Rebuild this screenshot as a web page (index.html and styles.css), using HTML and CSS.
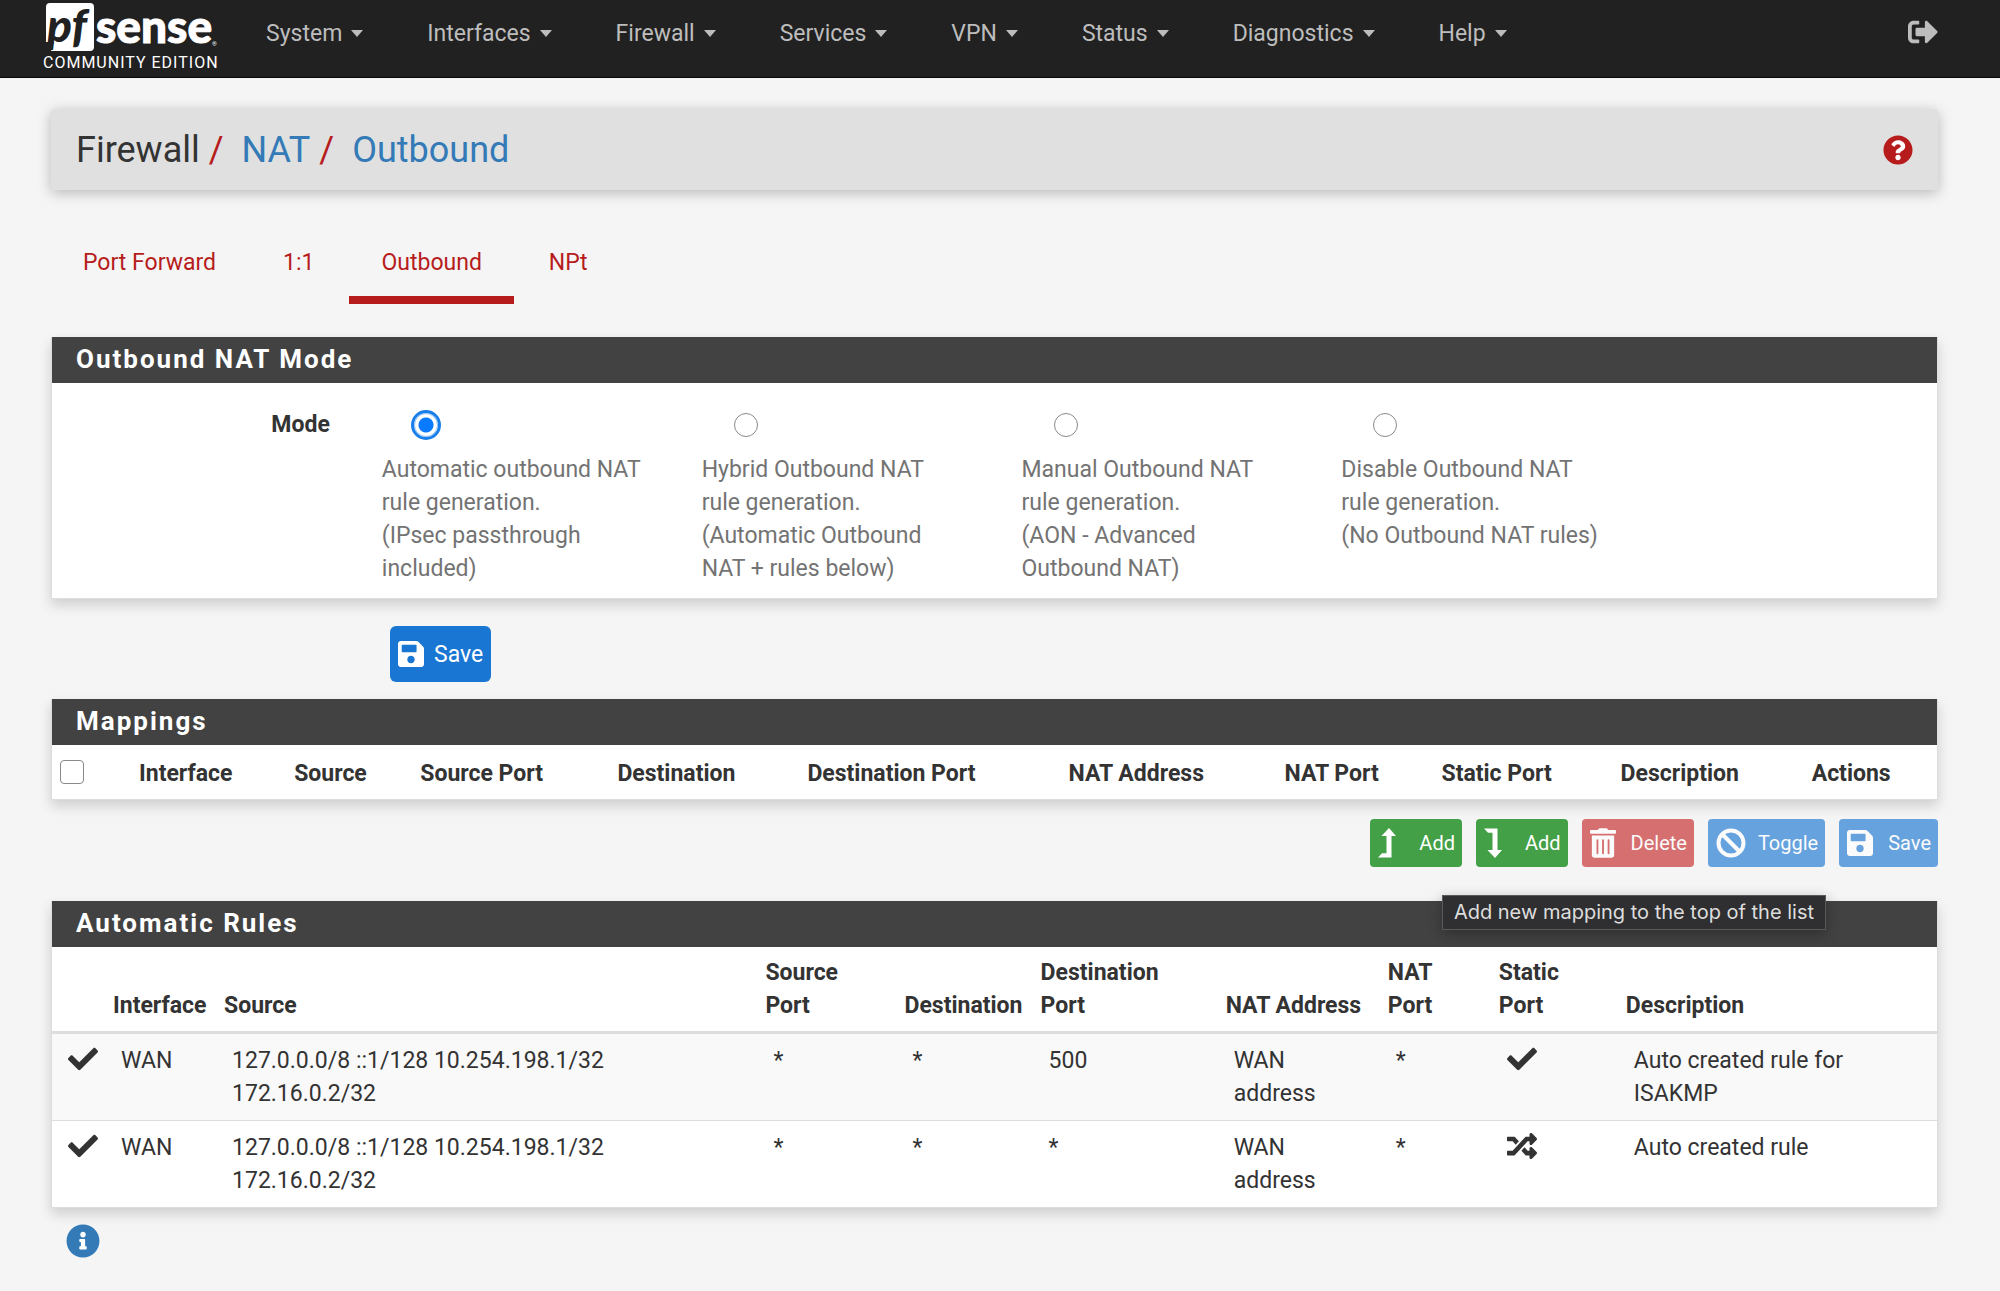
FILE: index.html
```html
<!DOCTYPE html>
<html lang="en">
<head>
    <meta charset="UTF-8">
    <meta name="viewport" content="width=device-width, initial-scale=1">
    <title>Firewall: NAT: Outbound</title>
    <link rel="stylesheet" href="styles.css">
</head>
<body>
    <!-- shared icon shapes -->
    <svg class="icon-defs" aria-hidden="true">
        <symbol id="icon-save" viewBox="0 0 448 512"><path d="M433.941 129.941l-83.882-83.882A48 48 0 0 0 316.118 32H48C21.49 32 0 53.49 0 80v352c0 26.51 21.49 48 48 48h352c26.51 0 48-21.49 48-48V163.882a48 48 0 0 0-14.059-33.941zM224 416c-35.346 0-64-28.654-64-64 0-35.346 28.654-64 64-64s64 28.654 64 64c0 35.346-28.654 64-64 64zm96-304.52V212c0 6.627-5.373 12-12 12H76c-6.627 0-12-5.373-12-12V108c0-6.627 5.373-12 12-12h228.52c3.183 0 6.235 1.264 8.485 3.515l3.48 3.48A11.996 11.996 0 0 1 320 111.48z"/></symbol>
        <symbol id="icon-check" viewBox="0 0 512 512"><path d="M173.898 439.404l-166.4-166.4c-9.997-9.997-9.997-26.206 0-36.204l36.203-36.204c9.997-9.998 26.207-9.998 36.204 0L192 312.69 432.095 72.596c9.997-9.997 26.207-9.997 36.204 0l36.203 36.204c9.997 9.997 9.997 26.206 0 36.204l-294.4 294.401c-9.998 9.997-26.207 9.997-36.204-.001z"/></symbol>
        <symbol id="icon-turn" viewBox="0 0 18 30"><path d="M11 0L18 8H13.500V29.500H0L4 25.300H8.500V8H3.500z" stroke-linejoin="round"/></symbol>
    </svg>

    <nav class="navbar">
        <a class="brand" href="#" aria-label="pfSense Community Edition">
            <svg class="logo" viewBox="0 0 174 50" width="174" height="50" aria-hidden="true">
                <path d="M3 4Q3 0 7 0H47Q51 0 51 4V44Q51 48 47 48H8L11 39L3 39z" fill="#fff"/>
                <text class="logo-pf" x="4" y="39">pf</text>
                <text class="logo-sense" x="53" y="40">sense</text>
                <text class="logo-mark" x="169" y="43">®</text>
            </svg>
            <span class="edition">COMMUNITY EDITION</span>
        </a>
        <ul class="menu">
            <li><a href="#">System <span class="caret"></span></a></li>
            <li><a href="#">Interfaces <span class="caret"></span></a></li>
            <li><a href="#">Firewall <span class="caret"></span></a></li>
            <li><a href="#">Services <span class="caret"></span></a></li>
            <li><a href="#">VPN <span class="caret"></span></a></li>
            <li><a href="#">Status <span class="caret"></span></a></li>
            <li><a href="#">Diagnostics <span class="caret"></span></a></li>
            <li><a href="#">Help <span class="caret"></span></a></li>
        </ul>
        <a class="logout" href="#" aria-label="Logout">
            <svg class="icon-lg" viewBox="0 0 512 512"><path d="M497 273L329 441c-15 15-41 4.500-41-17v-96H152c-13.300 0-24-10.700-24-24v-96c0-13.300 10.700-24 24-24h136V88c0-21.400 25.900-32 41-17l168 168c9.300 9.400 9.300 24.600 0 34zM192 436v-40c0-6.600-5.400-12-12-12H96c-17.700 0-32-14.300-32-32V160c0-17.700 14.300-32 32-32h84c6.600 0 12-5.400 12-12V76c0-6.600-5.400-12-12-12H96c-53 0-96 43-96 96v192c0 53 43 96 96 96h84c6.600 0 12-5.400 12-12z"/></svg>
        </a>
    </nav>

    <main class="container">
        <header class="page-header">
            <ol class="breadcrumb">
                <li>Firewall</li>
                <li><a href="#">NAT</a></li>
                <li><a href="#">Outbound</a></li>
            </ol>
            <a class="help" href="#" aria-label="Help for this page">
                <svg class="icon-lg" viewBox="0 0 512 512"><circle cx="256" cy="256" r="180" fill="#fff"/><path d="M504 256c0 136.997-111.043 248-248 248S8 392.997 8 256C8 119.083 119.043 8 256 8s248 111.083 248 248zM262.655 90c-54.497 0-89.255 22.957-116.549 63.758-3.536 5.286-2.353 12.415 2.715 16.258l34.699 26.310c5.205 3.947 12.621 3.008 16.665-2.122 17.864-22.658 30.113-35.797 57.303-35.797 20.429 0 45.698 13.148 45.698 32.958 0 14.976-12.363 22.667-32.534 33.976C247.128 238.528 216 254.941 216 296v4c0 6.627 5.373 12 12 12h56c6.627 0 12-5.373 12-12v-1.333c0-28.462 83.186-29.647 83.186-106.667 0-58.002-60.165-102-116.531-102zM256 338c-25.365 0-46 20.635-46 46 0 25.364 20.635 46 46 46s46-20.636 46-46c0-25.365-20.635-46-46-46z"/></svg>
            </a>
        </header>

        <ul class="tabs">
            <li><a href="#">Port Forward</a></li>
            <li><a href="#">1:1</a></li>
            <li class="active"><a href="#">Outbound</a></li>
            <li><a href="#">NPt</a></li>
        </ul>

        <form>
            <section class="panel">
                <h2 class="panel-heading">Outbound NAT Mode</h2>
                <div class="mode-row" role="radiogroup" aria-labelledby="mode-label">
                    <span class="mode-label" id="mode-label">Mode</span>
                    <label class="mode-option">
                        <input type="radio" name="mode" value="automatic" checked>
                        <span>Automatic outbound NAT rule generation.<br>(IPsec passthrough included)</span>
                    </label>
                    <label class="mode-option">
                        <input type="radio" name="mode" value="hybrid">
                        <span>Hybrid Outbound NAT rule generation.<br>(Automatic Outbound NAT + rules below)</span>
                    </label>
                    <label class="mode-option">
                        <input type="radio" name="mode" value="advanced">
                        <span>Manual Outbound NAT rule generation.<br>(AON - Advanced Outbound NAT)</span>
                    </label>
                    <label class="mode-option">
                        <input type="radio" name="mode" value="disabled">
                        <span>Disable Outbound NAT rule generation.<br>(No Outbound NAT rules)</span>
                    </label>
                </div>
            </section>
            <div class="form-actions">
                <button class="btn btn-primary" type="submit"><svg class="icon-save"><use href="#icon-save"/></svg>Save</button>
            </div>
        </form>

        <section class="panel">
            <h2 class="panel-heading">Mappings</h2>
            <table class="mappings">
                <colgroup><col><col><col><col><col><col><col><col><col><col><col></colgroup>
                <thead>
                    <tr>
                        <th><input type="checkbox" aria-label="Select all mappings"></th>
                        <th>Interface</th>
                        <th>Source</th>
                        <th>Source Port</th>
                        <th>Destination</th>
                        <th>Destination Port</th>
                        <th>NAT Address</th>
                        <th>NAT Port</th>
                        <th>Static Port</th>
                        <th>Description</th>
                        <th>Actions</th>
                    </tr>
                </thead>
            </table>
        </section>

        <div class="toolbar">
            <button class="btn btn-sm btn-success" type="button" aria-describedby="add-tip"><svg class="icon-turn"><use href="#icon-turn"/></svg>Add</button>
            <button class="btn btn-sm btn-success" type="button"><svg class="icon-turn down"><use href="#icon-turn"/></svg>Add</button>
            <button class="btn btn-sm btn-danger" type="button" disabled><svg class="icon-trash" viewBox="0 0 448 512"><path d="M32 464a48 48 0 0 0 48 48h288a48 48 0 0 0 48-48V128H32zm272-256a16 16 0 0 1 32 0v224a16 16 0 0 1-32 0zm-96 0a16 16 0 0 1 32 0v224a16 16 0 0 1-32 0zm-96 0a16 16 0 0 1 32 0v224a16 16 0 0 1-32 0zM432 32H312l-9.400-18.700A24 24 0 0 0 281.100 0H166.800a23.720 23.720 0 0 0-21.400 13.300L136 32H16A16 16 0 0 0 0 48v32a16 16 0 0 0 16 16h416a16 16 0 0 0 16-16V48a16 16 0 0 0-16-16z"/></svg>Delete</button>
            <button class="btn btn-sm btn-primary" type="button" disabled><svg class="icon-ban" viewBox="0 0 30 30"><circle cx="15" cy="15" r="12.500"/><path d="M6.500 6.500L23.500 23.500"/></svg>Toggle</button>
            <button class="btn btn-sm btn-primary" type="button" disabled><svg class="icon-save"><use href="#icon-save"/></svg>Save</button>
            <div class="tooltip" id="add-tip" role="tooltip">Add new mapping to the top of the list</div>
        </div>

        <section class="panel">
            <h2 class="panel-heading">Automatic Rules</h2>
            <table class="rules">
                <colgroup><col><col><col><col><col><col><col><col><col><col></colgroup>
                <thead>
                    <tr>
                        <th></th>
                        <th>Interface</th>
                        <th>Source</th>
                        <th>Source Port</th>
                        <th>Destination</th>
                        <th>Destination Port</th>
                        <th>NAT Address</th>
                        <th>NAT Port</th>
                        <th>Static Port</th>
                        <th>Description</th>
                    </tr>
                </thead>
                <tbody>
                    <tr>
                        <td><svg class="icon-cell"><use href="#icon-check"/></svg></td>
                        <td>WAN</td>
                        <td>127.0.0.0/8 ::1/128 10.254.198.1/32 172.16.0.2/32</td>
                        <td>*</td>
                        <td>*</td>
                        <td>500</td>
                        <td>WAN address</td>
                        <td>*</td>
                        <td><svg class="icon-cell"><use href="#icon-check"/></svg></td>
                        <td>Auto created rule for ISAKMP</td>
                    </tr>
                    <tr>
                        <td><svg class="icon-cell"><use href="#icon-check"/></svg></td>
                        <td>WAN</td>
                        <td>127.0.0.0/8 ::1/128 10.254.198.1/32 172.16.0.2/32</td>
                        <td>*</td>
                        <td>*</td>
                        <td>*</td>
                        <td>WAN address</td>
                        <td>*</td>
                        <td><svg class="icon-cell" viewBox="0 0 512 512"><path d="M504.971 359.029c9.373 9.373 9.373 24.569 0 33.941l-80 79.984c-15.010 15.010-40.971 4.490-40.971-16.971V416h-58.785a12.004 12.004 0 0 1-8.773-3.812l-70.556-75.596 53.333-57.143L352 336h32v-39.981c0-21.438 25.943-31.998 40.971-16.971l80 79.981zM12 176h84l52.781 56.551 53.333-57.143-70.556-75.596A11.999 11.999 0 0 0 122.785 96H12c-6.627 0-12 5.373-12 12v56c0 6.627 5.373 12 12 12zm372 0v39.984c0 21.460 25.961 31.980 40.971 16.971l80-79.984c9.373-9.373 9.373-24.569 0-33.941l-80-79.981C409.943 24.021 384 34.582 384 56.019V96h-58.785a12.004 12.004 0 0 0-8.773 3.812L96 336H12c-6.627 0-12 5.373-12 12v56c0 6.627 5.373 12 12 12h110.785c3.326 0 6.503-1.381 8.773-3.812L352 176h32z"/></svg></td>
                        <td>Auto created rule</td>
                    </tr>
                </tbody>
            </table>
        </section>

        <a class="info" href="#" aria-label="More information">
            <svg viewBox="0 0 512 512"><circle cx="256" cy="256" r="180" fill="#fff"/><path d="M256 8C119.043 8 8 119.083 8 256c0 136.997 111.043 248 248 248s248-111.003 248-248C504 119.083 392.957 8 256 8zm0 110c23.196 0 42 18.804 42 42s-18.804 42-42 42-42-18.804-42-42 18.804-42 42-42zm56 254c0 6.627-5.373 12-12 12h-88c-6.627 0-12-5.373-12-12v-24c0-6.627 5.373-12 12-12h12v-64h-12c-6.627 0-12-5.373-12-12v-24c0-6.627 5.373-12 12-12h64c6.627 0 12 5.373 12 12v100h12c6.627 0 12 5.373 12 12v24z"/></svg>
        </a>
    </main>
</body>
</html>
```

FILE: styles.css
```css
* {
    box-sizing: border-box;
}

body {
    margin: 0;
    background: #f5f5f5;
    color: #333;
    font-family: Roboto, "Liberation Sans", sans-serif;
    font-size: 23px;
    line-height: 33px;
}

a {
    color: #337ab7;
    text-decoration: none;
}

ul, ol {
    list-style: none;
    margin: 0;
    padding: 0;
}

svg {
    display: block;
    fill: currentColor;
}

.icon-defs {
    display: none;
}

.icon-lg {
    width: 30px;
    height: 30px;
}

/* navbar */
.navbar {
    display: flex;
    align-items: flex-start;
    height: 78px;
    padding: 0 62px 0 43px;
    background: #212121;
    border-bottom: 1px solid #080808;
}

.brand {
    display: flex;
    flex-direction: column;
    width: 174px;
    margin-right: 17px;
    padding-top: 3px;
    color: #fff;
}

.logo {
    overflow: visible;
}

.logo-pf,
.logo-sense {
    font-family: Lato, sans-serif;
    font-weight: 900;
    font-size: 46px;
}

.logo-pf {
    fill: #212121;
    font-style: italic;
}

.logo-sense,
.logo-mark {
    fill: #fff;
}

.logo-sense {
    stroke: #fff;
    stroke-width: 1;
}

.logo-mark {
    font-size: 6px;
}

.edition {
    font-size: 16px;
    line-height: 20px;
    letter-spacing: 1px;
    white-space: nowrap;
}

.menu {
    display: flex;
    flex: 1;
}

.menu a {
    display: flex;
    align-items: center;
    gap: 9px;
    padding: 17px 32px;
    color: #bdbdbd;
}

.caret {
    border-top: 7px solid;
    border-left: 6px solid transparent;
    border-right: 6px solid transparent;
}

.logout {
    padding-top: 17px;
    color: #bdbdbd;
}

/* page header */
.container {
    padding: 31px 62px 0 51px;
}

.page-header {
    display: flex;
    align-items: center;
    justify-content: space-between;
    height: 81px;
    padding: 0 25px;
    background: #e0e0e0;
    border-radius: 4px;
    box-shadow: 0 3px 14px rgba(0, 0, 0, .25);
}

.breadcrumb {
    display: flex;
    font-size: 36px;
    line-height: 40px;
}

.breadcrumb li + li::before {
    content: "/";
    padding: 0 18px 0 9px;
    color: #b71c1c;
}

.help {
    color: #b71c1c;
}

/* tabs */
.tabs {
    display: flex;
    gap: 3px;
    margin: 39px 0 33px;
}

.tabs a {
    display: block;
    padding: 17px 32px;
    border-bottom: 8px solid transparent;
    color: #b71c1c;
}

.tabs .active a {
    border-bottom-color: #b71c1c;
}

/* panels */
.panel {
    background: #fff;
    border: 1px solid #ddd;
    border-top: 0;
    box-shadow: 0 6px 12px rgba(0, 0, 0, .16);
}

.panel-heading {
    margin: 0;
    padding: 6px 24px 7px;
    background: #424242;
    color: #fff;
    font-size: 26px;
    font-weight: 700;
    letter-spacing: 2px;
}

.mode-row {
    display: grid;
    grid-template-columns: repeat(6, 1fr);
    margin: 0 -17px;
    padding: 25px 0 13px;
}

.mode-label {
    padding-right: 25px;
    text-align: right;
    font-weight: 700;
}

.mode-option {
    padding: 0 31px 0 27px;
    color: #737373;
}

.mode-option span {
    display: block;
}

input[type="radio"],
input[type="checkbox"] {
    appearance: none;
    display: block;
    width: 24px;
    height: 24px;
    margin: 0;
    border: 1px solid #8a8a8a;
    background: #fff;
}

input[type="radio"] {
    margin: 5px 0 16px 32px;
    border-radius: 50%;
}

input[type="radio"]:checked {
    border-color: #8fc3ff;
    background: radial-gradient(circle, #0a7aff 7px, #fff 8px);
    outline: 3px solid #1a7fe8;
}

input[type="checkbox"] {
    margin: 0 0 3px -1px;
    border-radius: 4px;
}

/* buttons */
.btn {
    display: flex;
    align-items: center;
    gap: 10px;
    height: 56px;
    padding: 0 8px;
    border: 0;
    border-radius: 6px;
    color: #fff;
    font-family: inherit;
    font-size: 23px;
}

.btn-sm {
    gap: 15px;
    height: 48px;
    padding: 0 7px 0 8px;
    border-radius: 4px;
    font-size: 20px;
}

.btn-primary { background: #1976d2; }
.btn-success { background: #43a047; }
.btn-danger { background: #c62828; }

.btn:disabled {
    opacity: .65;
}

.icon-save,
.icon-trash {
    width: 26px;
    height: 30px;
}

.icon-turn {
    width: 18px;
    height: 30px;
    margin-right: 8px;
}

.icon-turn.down {
    transform: scaleY(-1);
}

.icon-ban {
    width: 30px;
    height: 30px;
    margin-right: -3px;
    fill: none;
    stroke: currentColor;
    stroke-width: 4;
}

.form-actions {
    padding: 27px 0 17px 339px;
}

.toolbar {
    position: relative;
    display: flex;
    justify-content: flex-end;
    gap: 14px;
    margin: 19px 0 34px;
}

.tooltip {
    position: absolute;
    top: 76px;
    right: 112px;
    padding: 0 11px;
    background: #2f2f31;
    border: 1px solid #5a5a5c;
    box-shadow: 0 4px 14px rgba(0, 0, 0, .3);
    color: #dedede;
    font-family: Inter, sans-serif;
    font-size: 20px;
    white-space: nowrap;
}

/* tables */
table {
    width: 100%;
    table-layout: fixed;
    border-collapse: collapse;
}

th {
    padding: 9px;
    text-align: left;
    vertical-align: bottom;
}

td {
    padding: 10px 17px;
    vertical-align: top;
}

.mappings th {
    padding: 12px 9px 9px;
    vertical-align: middle;
}

.mappings col:nth-child(1) { width: 4.14%; }
.mappings col:nth-child(2) { width: 8.23%; }
.mappings col:nth-child(3) { width: 6.69%; }
.mappings col:nth-child(4) { width: 10.46%; }
.mappings col:nth-child(5) { width: 10.08%; }
.mappings col:nth-child(6) { width: 13.85%; }
.mappings col:nth-child(7) { width: 11.46%; }
.mappings col:nth-child(8) { width: 8.33%; }
.mappings col:nth-child(9) { width: 9.5%; }
.mappings col:nth-child(10) { width: 10.14%; }

.rules thead {
    border-bottom: 3px solid #ddd;
}

.rules tbody tr + tr {
    border-top: 1px solid #ddd;
}

.rules tbody tr:nth-child(odd) {
    background: #f9f9f9;
}

.rules col:nth-child(1) { width: 2.76%; }
.rules col:nth-child(2) { width: 5.89%; }
.rules col:nth-child(3) { width: 28.72%; }
.rules col:nth-child(4) { width: 7.38%; }
.rules col:nth-child(5) { width: 7.22%; }
.rules col:nth-child(6) { width: 9.82%; }
.rules col:nth-child(7) { width: 8.6%; }
.rules col:nth-child(8) { width: 5.89%; }
.rules col:nth-child(9) { width: 6.74%; }

.icon-cell {
    width: 30px;
    height: 30px;
}

.rules td:first-child {
    padding-left: 16px;
}

.info {
    display: block;
    width: 34px;
    margin: 16px 0 0 15px;
}
```
